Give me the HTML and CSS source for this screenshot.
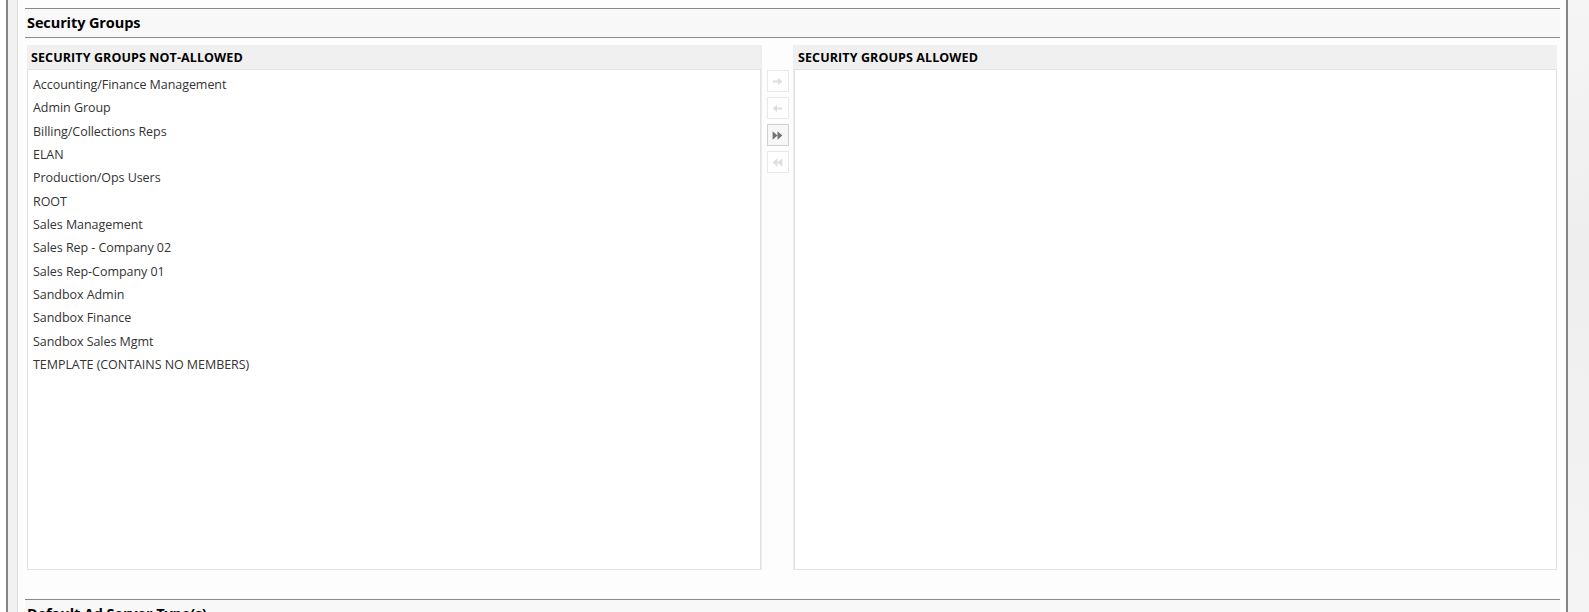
FILE: index.html
```html
<!DOCTYPE html>
<html>
<head>
<meta charset="utf-8">
<link rel="stylesheet" href="styles.css">
</head>
<body>
<div class="page">
  <div class="gutter-left"></div>
  <div class="frame">
    <div class="content">
      <section class="section">
        <div class="section-head">Security Groups</div>
        <div class="picker">
          <div class="col col-left">
            <div class="col-head">SECURITY GROUPS NOT-ALLOWED</div>
            <div class="listbox">
              <div class="item">Accounting/Finance Management</div>
              <div class="item">Admin Group</div>
              <div class="item">Billing/Collections Reps</div>
              <div class="item">ELAN</div>
              <div class="item">Production/Ops Users</div>
              <div class="item">ROOT</div>
              <div class="item">Sales Management</div>
              <div class="item">Sales Rep - Company 02</div>
              <div class="item">Sales Rep-Company 01</div>
              <div class="item">Sandbox Admin</div>
              <div class="item">Sandbox Finance</div>
              <div class="item">Sandbox Sales Mgmt</div>
              <div class="item">TEMPLATE (CONTAINS NO MEMBERS)</div>
            </div>
          </div>
          <div class="buttons">
            <button class="btn disabled" title="Move right">
              <svg viewBox="0 0 12 12" width="13" height="13"><path d="M1.5 5h5V2.5L10.5 6 6.5 9.5V7h-5z"/></svg>
            </button>
            <button class="btn disabled" title="Move left">
              <svg viewBox="0 0 12 12" width="13" height="13"><path d="M10.5 5h-5V2.5L1.5 6l4 3.5V7h5z"/></svg>
            </button>
            <button class="btn active" title="Move all right">
              <svg viewBox="0 0 12 12" width="13" height="13"><path d="M1.5 2L6 6 1.5 10z M6 2l4.5 4L6 10z"/></svg>
            </button>
            <button class="btn disabled" title="Move all left">
              <svg viewBox="0 0 12 12" width="13" height="13"><path d="M10.5 2L6 6l4.5 4z M6 2L1.5 6 6 10z"/></svg>
            </button>
          </div>
          <div class="col col-right">
            <div class="col-head">SECURITY GROUPS ALLOWED</div>
            <div class="listbox"></div>
          </div>
        </div>
      </section>
      <section class="section">
        <div class="section-head">Default Ad Server Type(s)</div>
      </section>
    </div>
  </div>
  <div class="gutter-right"></div>
</div>
</body>
</html>
```

FILE: styles.css
```css
* { box-sizing: border-box; }
html, body { margin: 0; padding: 0; height: 100%; overflow: hidden; }
body {
  background: #ffffff;
  font-family: "Open Sans", "Noto Sans", "Liberation Sans", sans-serif;
  color: #333;
}
.page {
  display: flex;
  height: 612px;
}
.gutter-left {
  width: 6px;
  flex: none;
  background: #ffffff;
}
.frame {
  flex: none;
  width: 1562px;
  border-left: 2px solid #858585;
  border-right: 2px solid #858585;
  background: linear-gradient(to right, #f1f1f1, #f7f7f7);
  padding-left: 9px;
  display: flex;
}
.content {
  flex: 1;
  border-left: 1px solid #dcdcdc;
  background: #fdfdfd;
  padding: 8px 6px 0 7px;
}
.gutter-right {
  flex: 1;
  background: linear-gradient(to bottom, #f5f5f5, #eeeeee 40%, #f4f4f4);
}
.section-head {
  height: 30px;
  border-top: 1px solid #8a8a8a;
  border-bottom: 1px solid #8a8a8a;
  background: #f8f8f8;
  font-weight: 700;
  font-size: 14.5px;
  color: #000;
  padding: 4px 0 0 2px;
  letter-spacing: -0.1px;
}
.picker {
  display: flex;
  padding: 7px 3px 29px 2px;
}
.col { display: flex; flex-direction: column; }
.col-left { width: 734px; }
.col-right { flex: 1; }
.col-head {
  height: 24px;
  background: #f0f0f0;
  font-weight: 700;
  font-size: 12.5px;
  color: #000;
  padding: 4px 0 0 4px;
  letter-spacing: 0.1px;
}
.listbox {
  height: 501px;
  border: 1px solid #e2e2e2;
  background: #ffffff;
  padding-top: 3px;
}
.item {
  height: 23.35px;
  line-height: 23px;
  font-size: 12.5px;
  padding-left: 5px;
  color: #333;
  letter-spacing: -0.05px;
}
.buttons {
  width: 33px;
  flex: none;
  display: flex;
  flex-direction: column;
  align-items: center;
  gap: 5px;
  padding-top: 25px;
  border-left: 1px solid #ececec;
  border-right: 1px solid #ececec;
}
.btn {
  width: 22px;
  height: 22px;
  padding: 0;
  margin: 0;
  border: 1px solid #e8e8e8;
  background: #ffffff;
  display: flex;
  align-items: center;
  justify-content: center;
}
.btn svg { display: block; }
.btn.disabled svg { fill: #dedede; }
.btn.active {
  border-color: #d0d0d0;
  background: #f7f7f7;
}
.btn.active svg { fill: #737373; }
```
